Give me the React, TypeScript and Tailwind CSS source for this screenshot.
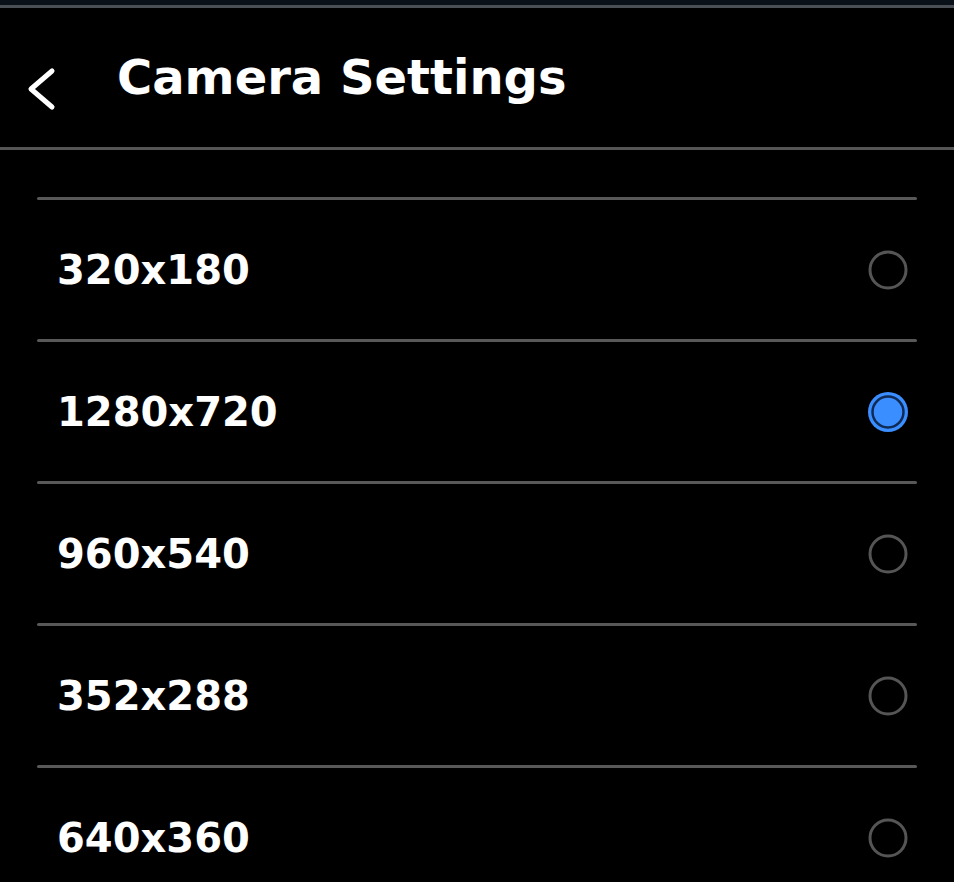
const resolutions = ["320x180", "1280x720", "960x540", "352x288", "640x360"];
const selected = "1280x720";

function Radio({ checked }: { checked: boolean }) {
  if (checked) {
    return (
      <svg width="42" height="42" viewBox="0 0 42 42">
        <circle cx="21" cy="21" r="20" fill="#3a8eff" />
        <circle cx="21" cy="21" r="15.5" fill="none" stroke="#0f2a55" strokeWidth="2.5" />
      </svg>
    );
  }
  return (
    <svg width="42" height="42" viewBox="0 0 42 42">
      <circle cx="21" cy="21" r="18" fill="none" stroke="#555555" strokeWidth="3" />
    </svg>
  );
}

export default function App() {
  return (
    <div
      className="h-[882px] w-[954px] overflow-hidden bg-black text-white"
      style={{ fontFamily: '"DejaVu Sans", sans-serif' }}
    >
      <div className="h-[5px] bg-[#0b1118]" />
      <div className="h-[3px] bg-[#4a4f56]" />

      <div className="flex h-[139px] items-center">
        <svg width="80" height="139" viewBox="0 0 80 139" className="shrink-0">
          <path
            d="M52 63 L31 81 L52 99"
            fill="none"
            stroke="white"
            strokeWidth="5"
            strokeLinecap="round"
            strokeLinejoin="round"
          />
        </svg>
        <h1 className="ml-[37px] pb-[2px] text-[48px] font-bold leading-none">Camera Settings</h1>
      </div>
      <div className="h-[3px] bg-[#555]" />

      <div className="mt-[47px] pl-[37px] pr-[37px]">
        {resolutions.map((res) => (
          <div key={res}>
            <div className="h-[3px] rounded-full bg-[#585858]" />
            <div className="flex h-[139px] items-center justify-between pl-[20px] pr-[8px]">
              <span className="text-[40px] font-bold leading-none">{res}</span>
              <Radio checked={res === selected} />
            </div>
          </div>
        ))}
      </div>
    </div>
  );
}
